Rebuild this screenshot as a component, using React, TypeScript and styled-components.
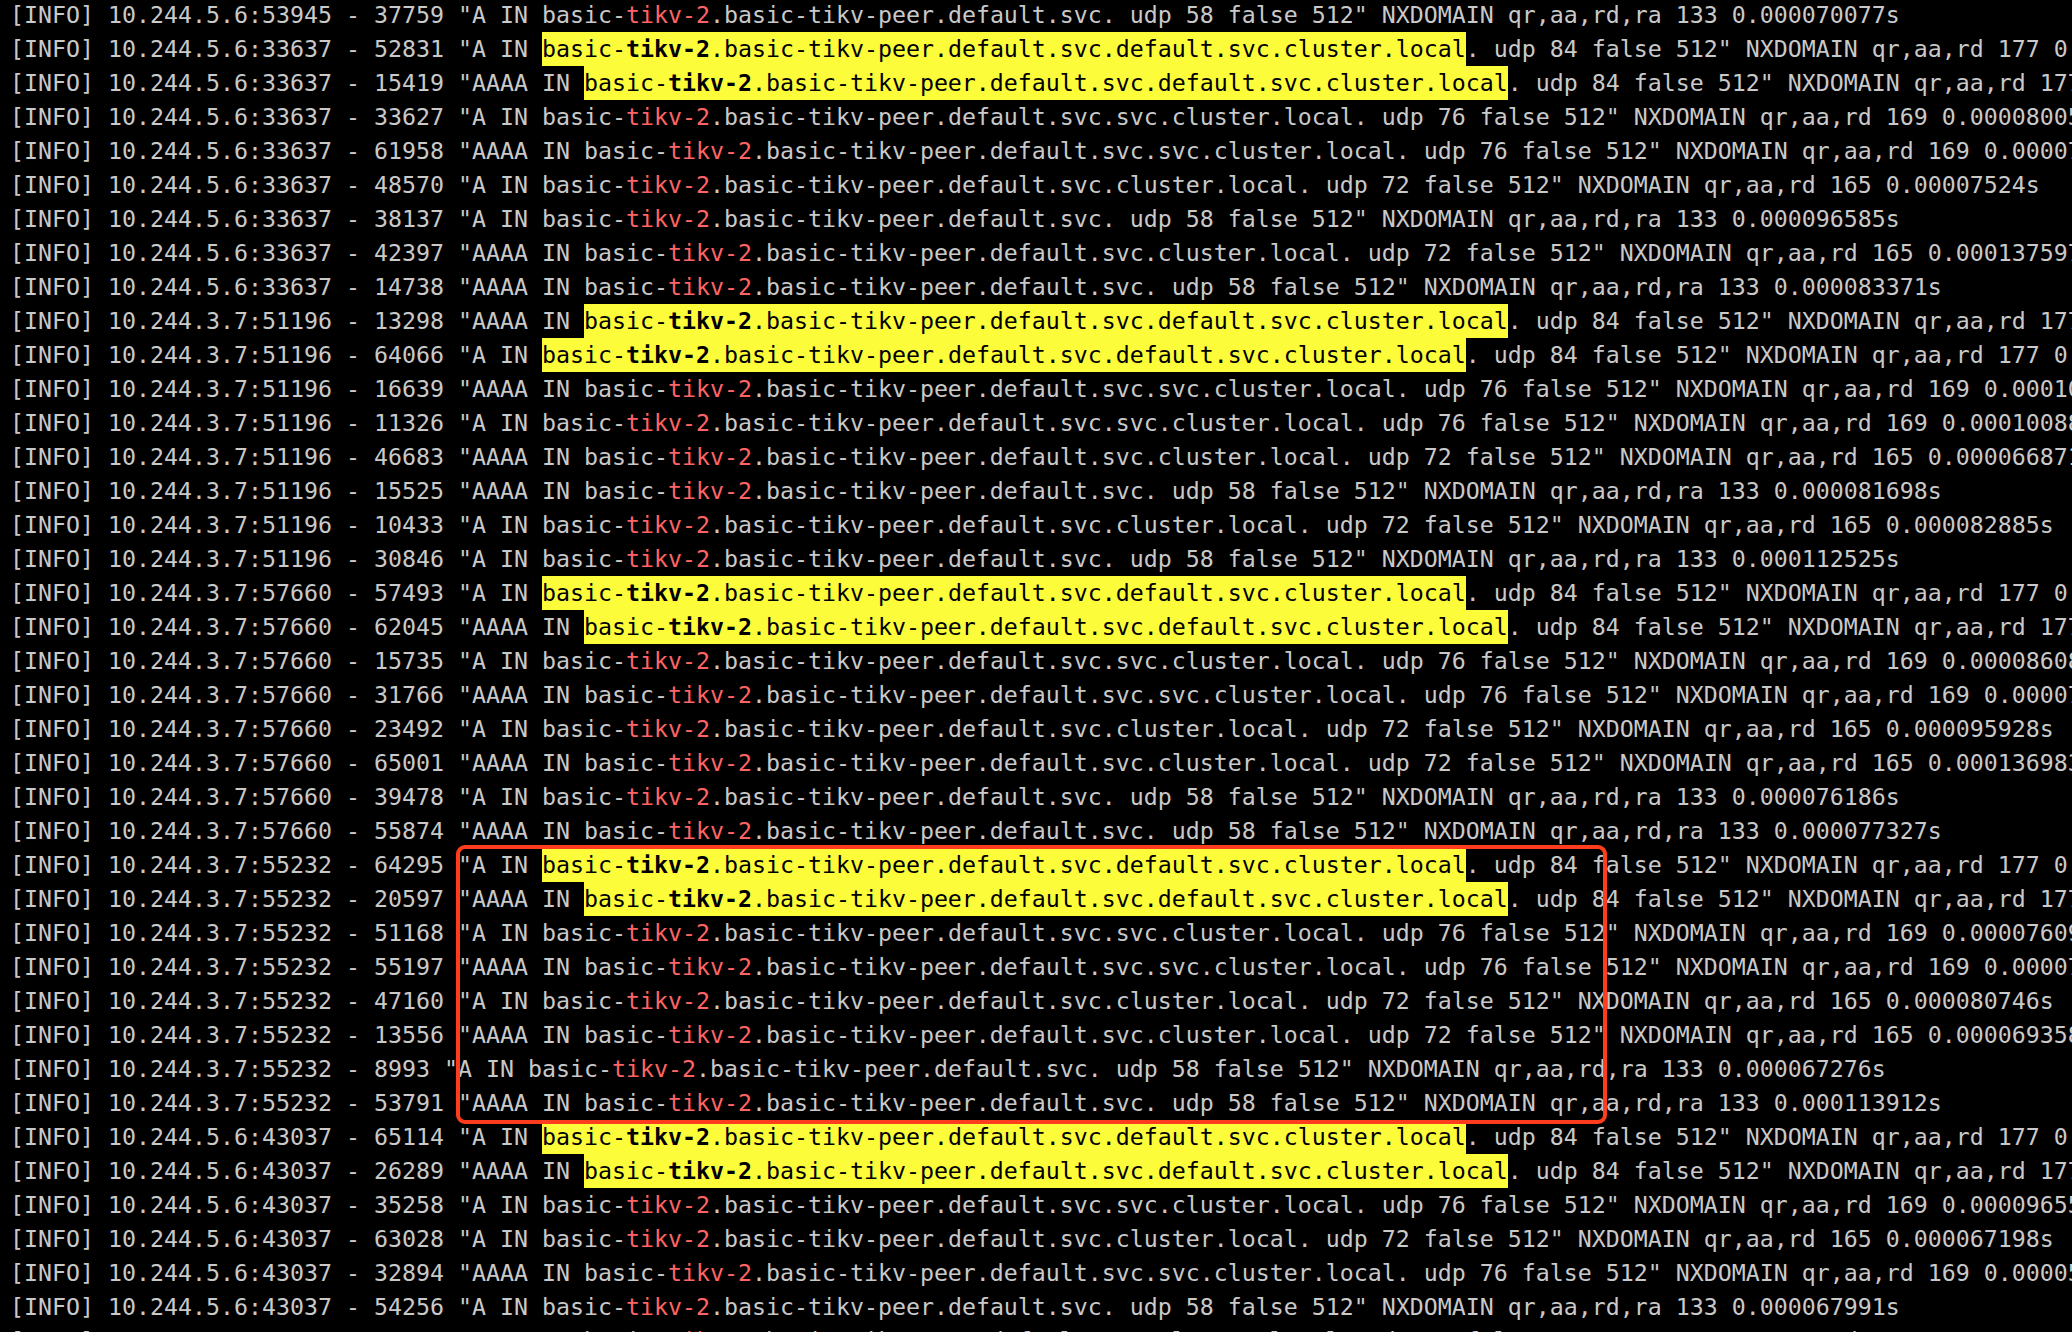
import React from "react";
import styled, { createGlobalStyle } from "styled-components";

const GlobalStyle = createGlobalStyle`
  html, body {
    margin: 0;
    padding: 0;
    background: #000;
    overflow: hidden;
  }
  #root {
    width: 2072px;
    height: 1332px;
  }
`;

const Screen = styled.div`
  position: relative;
  width: 2072px;
  height: 1332px;
  overflow: hidden;
  background: #000;
`;

const Terminal = styled.div`
  display: flex;
  flex-direction: column;
  margin-top: -2px;
  padding-left: 10px;
  font-family: "DejaVu Sans Mono", "Liberation Mono", monospace;
  font-size: 23.25px;
  line-height: 34px;
  color: #c9c9c9;
  white-space: pre;
`;

const Line = styled.div`
  height: 34px;
  line-height: 34px;
`;

const Red = styled.span`
  color: #ff6464;
`;

const Mark = styled.span`
  display: inline-block;
  height: 34px;
  line-height: 34px;
  background: #fdfc3a;
  color: #000;
  vertical-align: top;
`;

const Strong = styled.b`
  font-weight: 700;
`;

const Callout = styled.div`
  position: absolute;
  left: 456px;
  top: 845px;
  width: 1151px;
  height: 279px;
  box-sizing: border-box;
  border: 4px solid #ff3d1e;
  border-radius: 9px;
  pointer-events: none;
`;

type Kind = "svc" | "cl" | "svcsvc" | "hl";
type Row = [string, string, string, "A" | "AAAA", Kind, string];

const A = "5.6";
const B = "3.7";

const rows: Row[] = [
  [A, "53945", "37759", "A", "svc", "0.000070077s"],
  [A, "33637", "52831", "A", "hl", "0.000108302s"],
  [A, "33637", "15419", "AAAA", "hl", "0.000121457s"],
  [A, "33637", "33627", "A", "svcsvc", "0.000080052s"],
  [A, "33637", "61958", "AAAA", "svcsvc", "0.000071836s"],
  [A, "33637", "48570", "A", "cl", "0.00007524s"],
  [A, "33637", "38137", "A", "svc", "0.000096585s"],
  [A, "33637", "42397", "AAAA", "cl", "0.000137597s"],
  [A, "33637", "14738", "AAAA", "svc", "0.000083371s"],
  [B, "51196", "13298", "AAAA", "hl", "0.000109244s"],
  [B, "51196", "64066", "A", "hl", "0.000097731s"],
  [B, "51196", "16639", "AAAA", "svcsvc", "0.000101442s"],
  [B, "51196", "11326", "A", "svcsvc", "0.000100885s"],
  [B, "51196", "46683", "AAAA", "cl", "0.000066871s"],
  [B, "51196", "15525", "AAAA", "svc", "0.000081698s"],
  [B, "51196", "10433", "A", "cl", "0.000082885s"],
  [B, "51196", "30846", "A", "svc", "0.000112525s"],
  [B, "57660", "57493", "A", "hl", "0.000094512s"],
  [B, "57660", "62045", "AAAA", "hl", "0.000128301s"],
  [B, "57660", "15735", "A", "svcsvc", "0.000086083s"],
  [B, "57660", "31766", "AAAA", "svcsvc", "0.000073359s"],
  [B, "57660", "23492", "A", "cl", "0.000095928s"],
  [B, "57660", "65001", "AAAA", "cl", "0.000136983s"],
  [B, "57660", "39478", "A", "svc", "0.000076186s"],
  [B, "57660", "55874", "AAAA", "svc", "0.000077327s"],
  [B, "55232", "64295", "A", "hl", "0.000102871s"],
  [B, "55232", "20597", "AAAA", "hl", "0.000117265s"],
  [B, "55232", "51168", "A", "svcsvc", "0.000076093s"],
  [B, "55232", "55197", "AAAA", "svcsvc", "0.000072418s"],
  [B, "55232", "47160", "A", "cl", "0.000080746s"],
  [B, "55232", "13556", "AAAA", "cl", "0.000069358s"],
  [B, "55232", "8993", "A", "svc", "0.000067276s"],
  [B, "55232", "53791", "AAAA", "svc", "0.000113912s"],
  [A, "43037", "65114", "A", "hl", "0.000099426s"],
  [A, "43037", "26289", "AAAA", "hl", "0.000124583s"],
  [A, "43037", "35258", "A", "svcsvc", "0.000096551s"],
  [A, "43037", "63028", "A", "cl", "0.000067198s"],
  [A, "43037", "32894", "AAAA", "svcsvc", "0.000059372s"],
  [A, "43037", "54256", "A", "svc", "0.000067991s"],
  [A, "43037", "20913", "AAAA", "cl", "0.000068215s"],
];

const tails: Record<Exclude<Kind, "hl">, [string, string, string, string]> = {
  svc: ["default.svc.", "58", "qr,aa,rd,ra", "133"],
  cl: ["default.svc.cluster.local.", "72", "qr,aa,rd", "165"],
  svcsvc: ["default.svc.svc.cluster.local.", "76", "qr,aa,rd", "169"],
};

const LogLine: React.FC<{ row: Row }> = ({ row }) => {
  const [ip, port, id, type, kind, time] = row;
  const prefix = `[INFO] 10.244.${ip}:${port} - ${id} "${type} IN `;
  if (kind === "hl") {
    return (
      <Line>
        {prefix}
        <Mark>
          basic-<Strong>tikv-2</Strong>.basic-tikv-peer.default.svc.default.svc.cluster.local
        </Mark>
        {`. udp 84 false 512" NXDOMAIN qr,aa,rd 177 ${time}`}
      </Line>
    );
  }
  const [suffix, udp, flags, size] = tails[kind];
  return (
    <Line>
      {prefix}basic-<Red>tikv-2</Red>
      {`.basic-tikv-peer.${suffix} udp ${udp} false 512" NXDOMAIN ${flags} ${size} ${time}`}
    </Line>
  );
};

export default function App() {
  return (
    <Screen>
      <GlobalStyle />
      <Terminal>
        {rows.map((r, i) => (
          <LogLine key={i} row={r} />
        ))}
      </Terminal>
      <Callout />
    </Screen>
  );
}
